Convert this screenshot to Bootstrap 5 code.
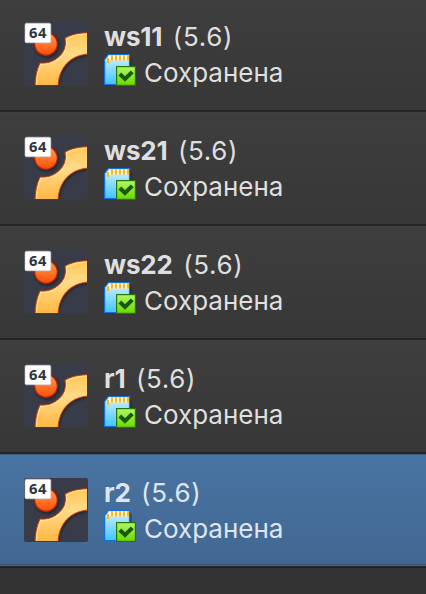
<!DOCTYPE html>
<html lang="ru">
<head>
<meta charset="utf-8">
<meta name="viewport" content="width=device-width, initial-scale=1">
<title>VM</title>
<link rel="stylesheet" href="https://cdn.jsdelivr.net/npm/bootstrap@5.3.0/dist/css/bootstrap.min.css">
<style>
body{background:#323232;font-family:Inter,"Noto Sans",sans-serif;color:#dfdfdf;height:594px}
.vm-list{margin-top:-2px}
.vm-item{height:114px;padding:23px 24px 0;background:linear-gradient(#3e3e3e,#373737);border-bottom:2px solid #242424;border-top:1px solid #404040}
.vm-item.selected{background:linear-gradient(#4973a2,#426892);border-top-color:#3b5b80;color:#dfe6ef;box-shadow:inset 0 -1px #426892,inset 0 -2px #345272}
.vm-logo{width:64px;height:64px;flex:none}
.vm-text{margin-left:16px}
.vm-name{height:32px;line-height:29px;font-size:26px;white-space:nowrap}
.vm-name b{font-weight:700;letter-spacing:-.2px}
.vm-name span{margin-left:10.5px;letter-spacing:.65px}
.vm-state{height:36px;line-height:38px;font-size:26px}
.vm-state svg{width:33px;height:33px;flex:none}
.vm-state span{margin-left:7px}
</style>
<script src="https://cdn.jsdelivr.net/npm/bootstrap@5.3.0/dist/js/bootstrap.bundle.min.js"></script>
</head>
<body class="overflow-hidden m-0">
<svg width="0" height="0" class="position-absolute" aria-hidden="true">
<defs>
<linearGradient id="gold" x1="0" y1="0" x2="0" y2="1"><stop offset="0" stop-color="#ffc858"/><stop offset=".4" stop-color="#ffda88"/><stop offset="1" stop-color="#ffb640"/></linearGradient>
<linearGradient id="ball" x1="0" y1="0" x2="0" y2="1"><stop offset="0" stop-color="#ff9a50"/><stop offset=".55" stop-color="#ff7328"/><stop offset="1" stop-color="#f44d08"/></linearGradient>
<linearGradient id="sd" x1="0" y1="0" x2="0" y2="1"><stop offset="0" stop-color="#d4f2ff"/><stop offset="1" stop-color="#3fc5ff"/></linearGradient>
<linearGradient id="ok" x1="0" y1="0" x2="0" y2="1"><stop offset="0" stop-color="#b0f868"/><stop offset="1" stop-color="#6ad800"/></linearGradient>
<filter id="glow" x="-30%" y="-30%" width="160%" height="160%"><feGaussianBlur stdDeviation="1.3"/></filter>
<clipPath id="tile"><rect width="63" height="63" rx="1"/></clipPath>
<symbol id="logo" viewBox="0 0 64 64">
<rect width="64" height="64" rx="2" fill="#383c48"/>
<g clip-path="url(#tile)">
<g fill="#15171e" opacity=".65" filter="url(#glow)" transform="translate(1 1.5)"><circle cx="22" cy="22" r="12"/><path d="M41 16Q50 10.700 66 10.600V32C46 33 34.500 46 34 66H11Q11 51 16 41Q26 42 33.500 36Q43.500 28 41 16Z"/></g>
<circle cx="22" cy="22" r="11.300" fill="url(#ball)" stroke="#b92208" stroke-width="1.200"/>
<path d="M41 16Q50 10.700 65 10.600V32C46 33 34.500 46 34 65H11Q11 51 16 41Q26 42 33.500 36Q43.500 28 41 16Z" fill="url(#gold)" stroke="#c83c0c" stroke-width="1"/>
<path d="M42.300 16.800Q50 12.300 65 12M12.500 65Q12.800 51 17 42.300Q27 43 34.500 37Q44.500 29 42.300 17" fill="none" stroke="#fff0aa" stroke-width="1.100" opacity=".6"/>
</g>
<rect x="1" y="1.200" width="25.800" height="19.600" rx="1.500" fill="#fff" stroke="#c9cbd0" stroke-width=".6"/>
<text x="5" y="16.100" font-family="Noto Sans,Open Sans,sans-serif" font-weight="700" font-size="14.700" textLength="17.300" fill="#30343e">64</text>
</symbol>
<symbol id="saved" viewBox="0 0 33 33">
<path d="M27 3.500V14" stroke="#1c1c1c" stroke-width="1.500" opacity=".5"/>
<path d="M.6 30.500V5.500L4.500.6H25.500V30.500Z" fill="url(#sd)" stroke="#126fe0" stroke-width="1.200"/>
<path d="M4.500 1.300H25V6.500H4.500Z" fill="#fff7df"/>
<path d="M4 4V9M8 1.300V6.500M12 1.300V6.500M16 1.300V6.500M20 1.300V6.500M24 1.300V6.500" stroke="#ffb510" stroke-width="2"/>
<rect x="12.600" y="12.600" width="18.800" height="18.800" fill="url(#ok)" stroke="#2b7409" stroke-width="1.200"/>
<path d="M15.800 20L21 25L28.300 17.800" fill="none" stroke="#185a0c" stroke-width="4"/>
</symbol>
</defs>
</svg>
<main class="vm-list">
<div class="vm-item d-flex"><svg class="vm-logo"><use href="#logo"/></svg><div class="vm-text"><div class="vm-name"><b>ws11</b><span>(5.6)</span></div><div class="vm-state d-flex"><svg><use href="#saved"/></svg><span>Сохранена</span></div></div></div>
<div class="vm-item d-flex"><svg class="vm-logo"><use href="#logo"/></svg><div class="vm-text"><div class="vm-name"><b>ws21</b><span>(5.6)</span></div><div class="vm-state d-flex"><svg><use href="#saved"/></svg><span>Сохранена</span></div></div></div>
<div class="vm-item d-flex"><svg class="vm-logo"><use href="#logo"/></svg><div class="vm-text"><div class="vm-name"><b>ws22</b><span>(5.6)</span></div><div class="vm-state d-flex"><svg><use href="#saved"/></svg><span>Сохранена</span></div></div></div>
<div class="vm-item d-flex"><svg class="vm-logo"><use href="#logo"/></svg><div class="vm-text"><div class="vm-name"><b>r1</b><span>(5.6)</span></div><div class="vm-state d-flex"><svg><use href="#saved"/></svg><span>Сохранена</span></div></div></div>
<div class="vm-item selected d-flex"><svg class="vm-logo"><use href="#logo"/></svg><div class="vm-text"><div class="vm-name"><b>r2</b><span>(5.6)</span></div><div class="vm-state d-flex"><svg><use href="#saved"/></svg><span>Сохранена</span></div></div></div>
</main>
</body>
</html>
